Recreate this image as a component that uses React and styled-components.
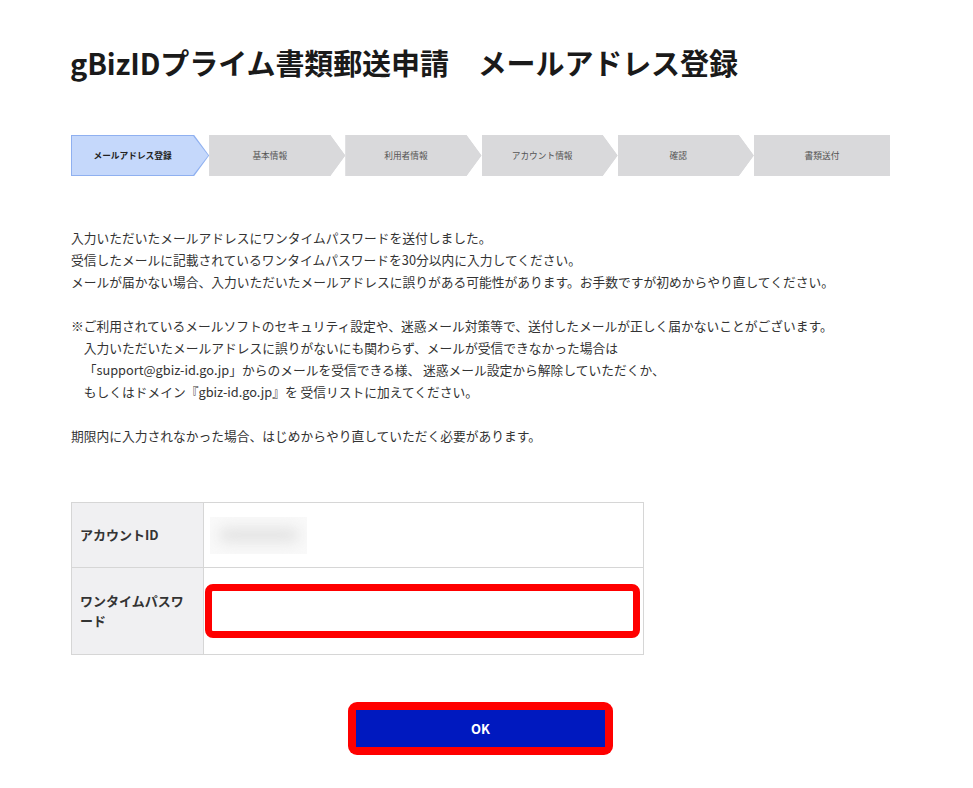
import styled, { createGlobalStyle } from "styled-components";

const GlobalStyle = createGlobalStyle`
  html, body {
    margin: 0;
    padding: 0;
    background: #ffffff;
  }
  body {
    font-family: "Noto Sans CJK JP", "Noto Sans", sans-serif;
    color: #333333;
  }
`;

const steps = ["メールアドレス登録", "基本情報", "利用者情報", "アカウント情報", "確認", "書類送付"];

const IND = "\u3000";

function App() {
  return (
    <>
      <GlobalStyle />
      <Page>
        <Title>gBizIDプライム書類郵送申請　メールアドレス登録</Title>

        <Stepper>
          {steps.map((label, i) => (
            <Step key={label} $active={i === 0} $last={i === steps.length - 1}>
              <StepInner $active={i === 0} $last={i === steps.length - 1}>
                <StepLabel $active={i === 0}>{label}</StepLabel>
              </StepInner>
            </Step>
          ))}
        </Stepper>

        <Message>
          <p>
            入力いただいたメールアドレスにワンタイムパスワードを送付しました。
            <br />
            受信したメールに記載されているワンタイムパスワードを30分以内に入力してください。
            <br />
            メールが届かない場合、入力いただいたメールアドレスに誤りがある可能性があります。お手数ですが初めからやり直してください。
          </p>
          <p>
            ※ご利用されているメールソフトのセキュリティ設定や、迷惑メール対策等で、送付したメールが正しく届かないことがございます。
            <br />
            {IND}入力いただいたメールアドレスに誤りがないにも関わらず、メールが受信できなかった場合は
            <br />
            {IND}「support@gbiz-id.go.jp」からのメールを受信できる様、 迷惑メール設定から解除していただくか、
            <br />
            {IND}もしくはドメイン『gbiz-id.go.jp』を 受信リストに加えてください。
          </p>
          <p>期限内に入力されなかった場合、はじめからやり直していただく必要があります。</p>
        </Message>

        <FormTable>
          <tbody>
            <tr>
              <HeadCell>アカウントID</HeadCell>
              <ValueCell $h={64}>
                <BlurBox>
                  <Blurred />
                </BlurBox>
              </ValueCell>
            </tr>
            <tr>
              <HeadCell>ワンタイムパスワード</HeadCell>
              <ValueCell $h={86}>
                <Highlight>
                  <PasswordInput type="text" />
                </Highlight>
              </ValueCell>
            </tr>
          </tbody>
        </FormTable>

        <ButtonRow>
          <ButtonFrame>
            <OkButton type="button">OK</OkButton>
          </ButtonFrame>
        </ButtonRow>
      </Page>
    </>
  );
}

export default App;

const Page = styled.div`
  width: 819px;
  padding: 40px 0 30px 71px;
`;

const Title = styled.h1`
  margin: 0 0 0 -1px;
  font-size: 29px;
  font-weight: 700;
  line-height: 44px;
  color: #1a1a1a;
  letter-spacing: -0.1px;
`;

const Stepper = styled.div`
  display: flex;
  margin-top: 51px;
  height: 41px;
`;

const Step = styled.div`
  flex: 1;
  height: 100%;
  background: ${(p) => (p.$active ? "#8fb0f0" : "#d9d9db")};
  clip-path: ${(p) =>
    p.$last
      ? "none"
      : "polygon(0 0, calc(100% - 15px) 0, 100% 50%, calc(100% - 15px) 100%, 0 100%)"};
  padding: ${(p) => (p.$active ? "1px" : "0")};
  box-sizing: border-box;
`;

const StepInner = styled.div`
  height: 100%;
  background: ${(p) => (p.$active ? "#c5d8fb" : "#d9d9db")};
  clip-path: ${(p) =>
    p.$last
      ? "none"
      : "polygon(0 0, calc(100% - 15px) 0, 100% 50%, calc(100% - 15px) 100%, 0 100%)"};
  display: flex;
  align-items: center;
  justify-content: center;
  padding-right: ${(p) => (p.$last ? "0" : "15px")};
  box-sizing: border-box;
`;

const StepLabel = styled.span`
  font-size: 8.7px;
  color: ${(p) => (p.$active ? "#222" : "#555")};
  font-weight: ${(p) => (p.$active ? 700 : 400)};
`;

const Message = styled.div`
  margin-top: 51px;
  font-size: 12.75px;
  line-height: 22px;
  color: #333;
  text-spacing-trim: space-all;

  p {
    margin: 0 0 22px 0;
  }
`;

const FormTable = styled.table`
  margin-top: 55px;
  width: 573px;
  border-collapse: collapse;
  font-size: 13px;
`;

const HeadCell = styled.th`
  width: 115px;
  padding: 0 8px;
  background: #f0f0f2;
  border: 1px solid #d6d6d6;
  text-align: left;
  font-weight: 700;
  line-height: 20px;
  color: #333;
`;

const ValueCell = styled.td`
  height: ${(p) => p.$h}px;
  padding: 0 3px 0 1px;
  border: 1px solid #d6d6d6;
  background: #fff;
`;

const BlurBox = styled.div`
  width: 97px;
  height: 37px;
  margin-left: 5px;
  overflow: hidden;
  background: #f9f9f9;
  display: flex;
  align-items: center;
  justify-content: center;
`;

const Blurred = styled.div`
  width: 80px;
  height: 14px;
  background: #e2e2e2;
  border-radius: 8px;
  filter: blur(7px);
`;

const Highlight = styled.div`
  border: 7px solid #ff0000;
  border-radius: 8px;
  height: 40px;
  background: #fff;
`;

const PasswordInput = styled.input`
  width: 100%;
  height: 100%;
  border: none;
  outline: none;
  background: transparent;
  font-size: 13px;
  box-sizing: border-box;
`;

const ButtonRow = styled.div`
  display: flex;
  justify-content: center;
  margin-top: 47px;
`;

const ButtonFrame = styled.div`
  padding: 8px;
  background: #ff0000;
  border-radius: 9px;
  display: flex;
`;

const OkButton = styled.button`
  width: 249px;
  height: 37px;
  border: none;
  background: #0019bf;
  color: #fff;
  font-family: "Noto Sans CJK JP", "Noto Sans", sans-serif;
  font-size: 13px;
  font-weight: 700;
  cursor: pointer;
`;
